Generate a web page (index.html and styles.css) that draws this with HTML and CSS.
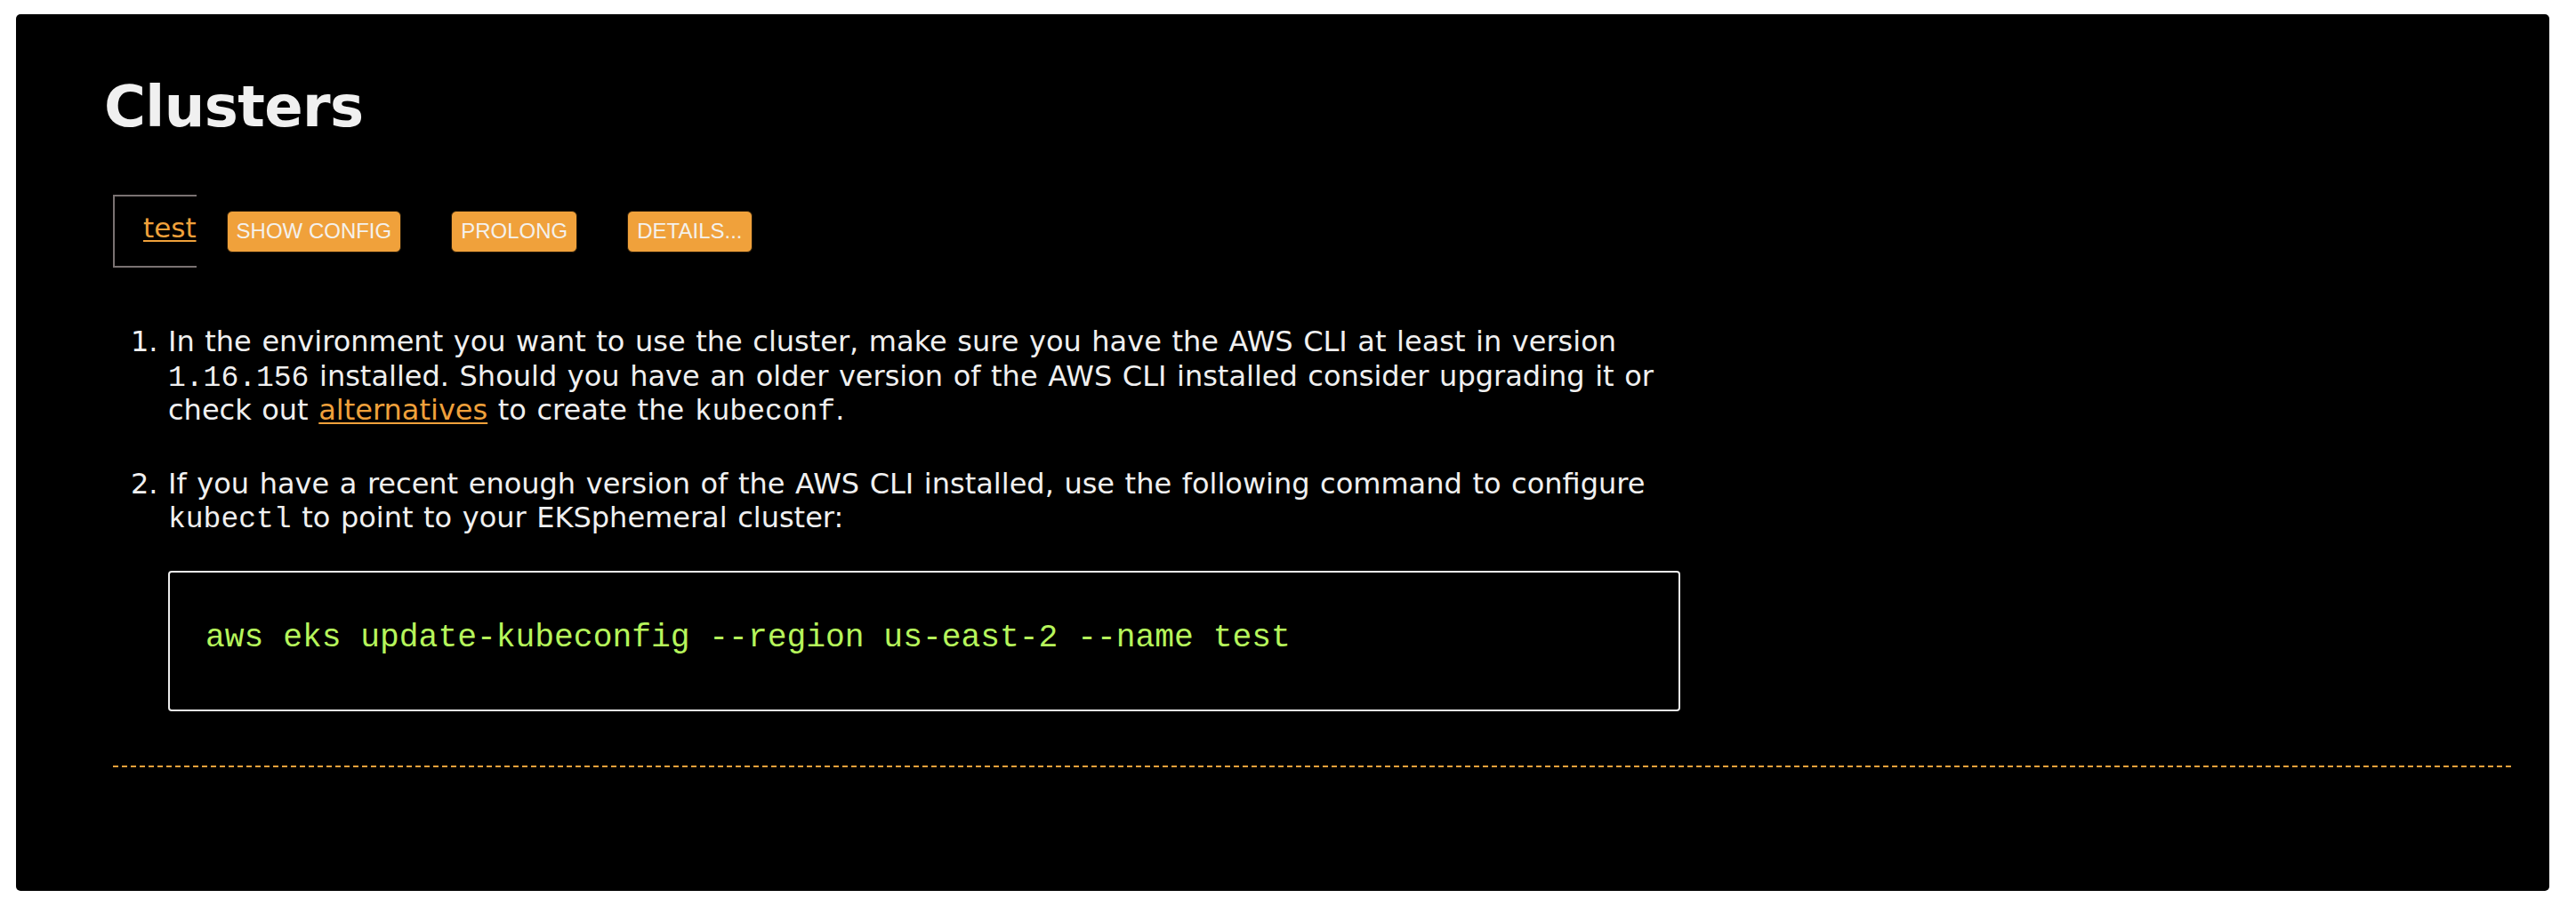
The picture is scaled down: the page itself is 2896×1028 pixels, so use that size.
FILE: index.html
```html
<!DOCTYPE html>
<html lang="en">
<head>
<meta charset="utf-8">
<title>Clusters</title>
<link rel="stylesheet" href="styles.css">
</head>
<body>
<main class="panel">
  <h1 class="title">Clusters</h1>
  <div class="cluster-row">
    <div class="tab"><a href="#" class="link">test</a></div>
    <div class="actions">
      <button class="btn">SHOW CONFIG</button>
      <button class="btn">PROLONG</button>
      <button class="btn">DETAILS...</button>
    </div>
  </div>
  <ol class="steps">
    <li class="step">In the environment you want to use the cluster, make sure you have the AWS CLI at least in version <code class="ic">1.16.156</code> installed. Should you have an older version of the AWS CLI installed consider upgrading it or check out <a href="#" class="link">alternatives</a> to create the <code class="ic">kubeconf</code>.</li>
    <li class="step">If you have a recent enough version of the AWS CLI installed, use the following command to configure <code class="ic">kubectl</code> to point to your EKSphemeral cluster:
      <pre class="cmd"><code>aws eks update-kubeconfig --region us-east-2 --name test</code></pre>
    </li>
  </ol>
  <div class="divider"></div>
</main>
</body>
</html>
```

FILE: styles.css
```css
html, body {
  background: #ffffff;
}
body {
  margin: 16px 30px 26px 18px;
}
.panel {
  box-sizing: border-box;
  height: 986px;
  background: #000000;
  border-radius: 5px;
  padding: 72px 40px 0 109px;
  color: #f0f0f0;
  font-family: "DejaVu Sans", Verdana, sans-serif;
}
.title {
  margin: 0 0 0 -10px;
  font-family: "DejaVu Sans", Verdana, sans-serif;
  font-weight: bold;
  font-size: 64px;
  line-height: 64px;
  letter-spacing: -0.6px;
  color: #f0f0f0;
}
.cluster-row {
  display: flex;
  align-items: center;
  margin-top: 67px;
}
.tab {
  box-sizing: border-box;
  height: 82px;
  border: 2px solid #7a7272;
  border-right: none;
  padding: 0 0 8px 32px;
  font-size: 31px;
  line-height: 70px;
}
.link {
  color: #f0a13b;
  text-decoration: underline;
  text-decoration-thickness: 2px;
  text-underline-offset: 3px;
}
.actions {
  display: flex;
  align-items: center;
  gap: 56px;
  margin-left: 34px;
}
.btn {
  box-sizing: border-box;
  height: 47px;
  padding: 0 10px;
  display: inline-flex;
  align-items: center;
  background: #f0a13b;
  color: #f4f1ec;
  border: 1px solid #2a1c08;
  border-radius: 6px;
  font-family: "Liberation Sans", Arial, sans-serif;
  font-size: 24px;
  line-height: 1;
}
.steps {
  margin: 64px 0 0 0;
  padding-left: 62px;
  max-width: 1700px;
  font-size: 32px;
  line-height: 38.5px;
  word-spacing: 1.4px;
}
.step + .step {
  margin-top: 44px;
}
.ic {
  font-family: "Liberation Mono", "Courier New", monospace;
  font-size: 33px;
  line-height: 1;
  word-spacing: 0;
  color: #f0f0f0;
}
.cmd {
  box-sizing: border-box;
  display: flex;
  align-items: center;
  width: 1700px;
  height: 158px;
  margin: 40px 0 0 0;
  padding: 0 0 5px 40px;
  border: 2px solid #ececec;
  border-radius: 4px;
  font-family: "Liberation Mono", "Courier New", monospace;
  font-size: 36.3px;
  word-spacing: 0;
  color: #b6f55b;
}
.cmd code {
  font-family: inherit;
}
.divider {
  margin-top: 61px;
  height: 2px;
  background-image: repeating-linear-gradient(to right, #f0a13b 0, #f0a13b 6px, transparent 6px, transparent 10px);
}
```
